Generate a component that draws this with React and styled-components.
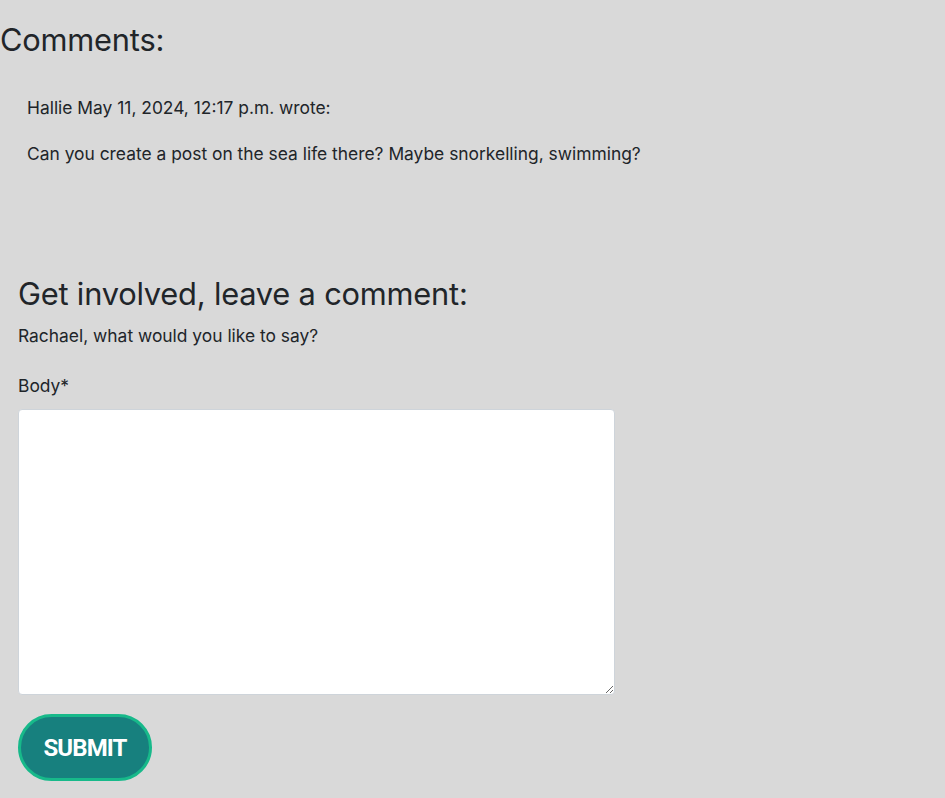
import React from 'react';
import styled, { createGlobalStyle } from 'styled-components';

const GlobalStyle = createGlobalStyle`
  body {
    margin: 0;
    background: #d9d9d9;
    font-family: Inter, "Noto Sans", sans-serif;
    color: #212529;
  }
`;

const Page = styled.div`
  width: 945px;
  min-height: 798px;
`;

const SectionTitle = styled.h3`
  font-size: 30.8px;
  font-weight: 400;
  line-height: 36px;
  letter-spacing: -0.2px;
  margin: 0;
  padding-top: ${props => props.top || 0}px;
`;

const CommentBox = styled.div`
  padding: 38px 27px 0;
  height: 218px;
  box-sizing: border-box;
`;

const Text = styled.p`
  font-size: 17.4px;
  line-height: 24px;
  margin: ${props => props.top || 0}px 0 ${props => props.gap || 0}px;
`;

const Form = styled.form`
  padding: 0 18px;
  display: flex;
  flex-direction: column;
  align-items: flex-start;
`;

const Label = styled.label`
  font-size: 17.4px;
  line-height: 24px;
  margin-bottom: 11px;
`;

const TextArea = styled.textarea`
  width: 597px;
  height: 286px;
  box-sizing: border-box;
  background: #fff;
  border: 1px solid #ced4da;
  border-radius: 4px;
  margin: 0 0 19px;
`;

const SubmitButton = styled.button`
  width: 134px;
  height: 67px;
  border-radius: 34px;
  border: 3px solid #17b98a;
  background: #17807e;
  color: #fff;
  font-family: Roboto, "Liberation Sans", sans-serif;
  font-weight: 700;
  font-size: 24px;
  letter-spacing: -0.9px;
  padding: 0;
`;

export default function App() {
  return (
    <Page>
      <GlobalStyle />
      <SectionTitle top={22}>Comments:</SectionTitle>
      <CommentBox>
        <Text gap={22}>Hallie May 11, 2024, 12:17 p.m. wrote:</Text>
        <Text>Can you create a post on the sea life there? Maybe snorkelling, swimming?</Text>
      </CommentBox>
      <Form onSubmit={e => e.preventDefault()}>
        <SectionTitle>Get involved, leave a comment:</SectionTitle>
        <Text top={12} gap={26}>Rachael, what would you like to say?</Text>
        <Label>Body*</Label>
        <TextArea />
        <SubmitButton type="submit">SUBMIT</SubmitButton>
      </Form>
    </Page>
  );
}
